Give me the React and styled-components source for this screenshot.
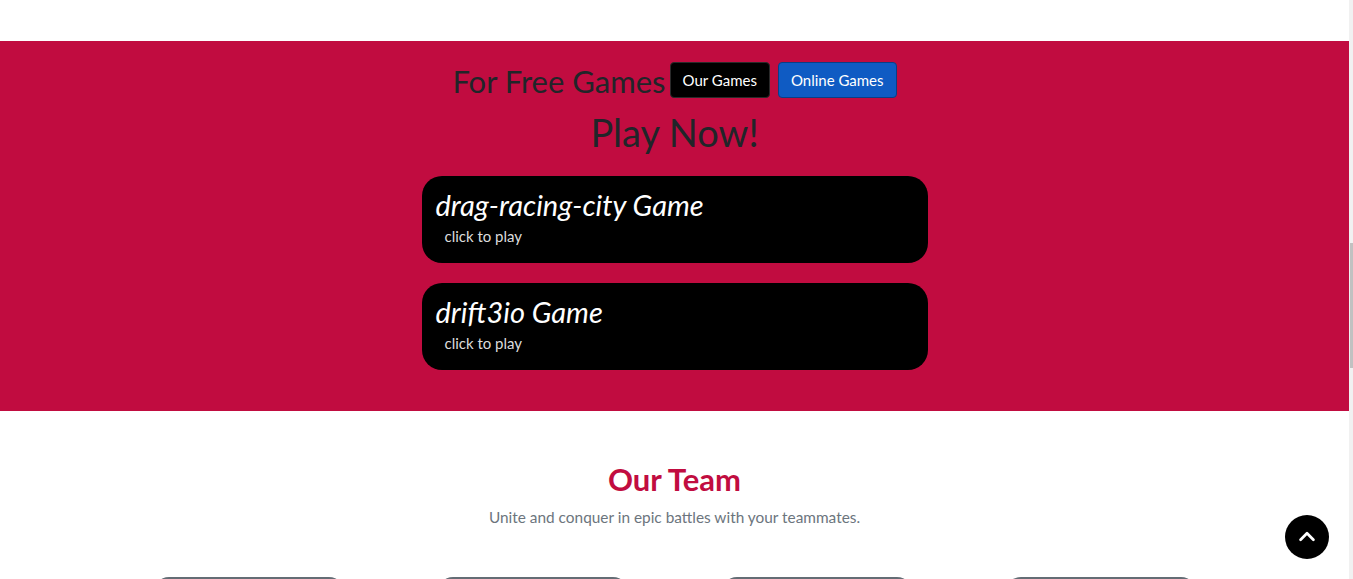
import React from "react";
import styled, { createGlobalStyle } from "styled-components";

const GlobalStyle = createGlobalStyle`
  html, body {
    margin: 0;
    padding: 0;
    overflow: hidden;
    background: #ffffff;
    font-family: Lato, "Open Sans", sans-serif;
    color: #212529;
  }
  * {
    box-sizing: border-box;
  }
`;

const Page = styled.div`
  width: 1349px;
  display: flex;
  flex-direction: column;
`;

const TopGap = styled.div`
  height: 41px;
  background: #ffffff;
`;

const GamesSection = styled.section`
  background: #c10c40;
  display: flex;
  flex-direction: column;
  align-items: center;
  padding: 21px 0 41px 0;
`;

const HeadRow = styled.div`
  display: flex;
  align-items: center;
  gap: 4px;
`;

const HeadText = styled.h2`
  margin: 0;
  font-size: 31px;
  font-weight: 400;
  color: #212529;
  line-height: 1;
  padding-top: 2px;
`;

const TabButton = styled.button`
  height: 36px;
  padding: 0 12px;
  margin-left: ${({ $spaced }) => ($spaced ? "4px" : "0")};
  border-radius: 4px;
  border: 1px solid ${({ $primary }) => ($primary ? "#0a3e86" : "#2a2a2a")};
  background: ${({ $primary }) => ($primary ? "#0f5bc3" : "#000000")};
  color: #ffffff;
  font-family: inherit;
  font-size: 15px;
  cursor: pointer;
`;

const BigTitle = styled.h1`
  margin: 8px 0 0 0;
  font-size: 38px;
  font-weight: 400;
  line-height: 52px;
  color: #212529;
`;

const CardList = styled.div`
  display: flex;
  flex-direction: column;
  gap: 20px;
  margin-top: 18px;
`;

const GameCard = styled.div`
  width: 506px;
  height: 87px;
  background: #000000;
  border-radius: 20px;
  padding: 12px 14px 10px 14px;
  display: flex;
  flex-direction: column;
  cursor: pointer;
`;

const GameName = styled.div`
  font-size: 29px;
  font-style: italic;
  color: #ffffff;
  line-height: 34px;
`;

const PlayHint = styled.div`
  margin: 5px 0 0 9px;
  font-size: 15px;
  color: #dcdcdc;
`;

const TeamSection = styled.section`
  display: flex;
  flex-direction: column;
  align-items: center;
  padding-top: 49px;
`;

const TeamTitle = styled.h2`
  margin: 0;
  font-size: 31px;
  font-weight: 700;
  color: #c10c40;
  line-height: 38px;
`;

const TeamDesc = styled.p`
  margin: 10px 0 0 0;
  font-size: 15.4px;
  color: #6c757d;
`;

const MemberRow = styled.div`
  display: flex;
  gap: 92px;
  margin-top: 51px;
`;

const MemberPhoto = styled.div`
  width: 192px;
  height: 240px;
  border-radius: 16px;
  background: #646d75;
`;

const TopButton = styled.button`
  position: fixed;
  left: 1285px;
  top: 515px;
  width: 44px;
  height: 44px;
  border-radius: 50%;
  border: none;
  background: #000000;
  display: flex;
  align-items: center;
  justify-content: center;
  padding: 0;
  cursor: pointer;
`;

const ScrollTrack = styled.div`
  position: fixed;
  top: 0;
  right: 0;
  width: 4px;
  height: 100%;
  background: #f1f1f1;
`;

const ScrollThumb = styled.div`
  position: absolute;
  top: 243px;
  left: 1px;
  width: 3px;
  height: 125px;
  background: #c1c1c1;
`;

const games = ["drag-racing-city", "drift3io"];

export default function App() {
  return (
    <>
      <GlobalStyle />
      <Page>
        <TopGap />
        <GamesSection>
          <HeadRow>
            <HeadText>For Free Games</HeadText>
            <TabButton>Our Games</TabButton>
            <TabButton $primary $spaced>
              Online Games
            </TabButton>
          </HeadRow>
          <BigTitle>Play Now!</BigTitle>
          <CardList>
            {games.map((g) => (
              <GameCard key={g}>
                <GameName>{g} Game</GameName>
                <PlayHint>click to play</PlayHint>
              </GameCard>
            ))}
          </CardList>
        </GamesSection>
        <TeamSection>
          <TeamTitle>Our Team</TeamTitle>
          <TeamDesc>Unite and conquer in epic battles with your teammates.</TeamDesc>
          <MemberRow>
            <MemberPhoto />
            <MemberPhoto />
            <MemberPhoto />
            <MemberPhoto />
          </MemberRow>
        </TeamSection>
      </Page>
      <TopButton aria-label="back to top">
        <svg width="22" height="22" viewBox="0 0 24 24" fill="none" stroke="#ffffff" strokeWidth="3" strokeLinecap="round" strokeLinejoin="round">
          <path d="M5 15l7-7 7 7" />
        </svg>
      </TopButton>
      <ScrollTrack>
        <ScrollThumb />
      </ScrollTrack>
    </>
  );
}
